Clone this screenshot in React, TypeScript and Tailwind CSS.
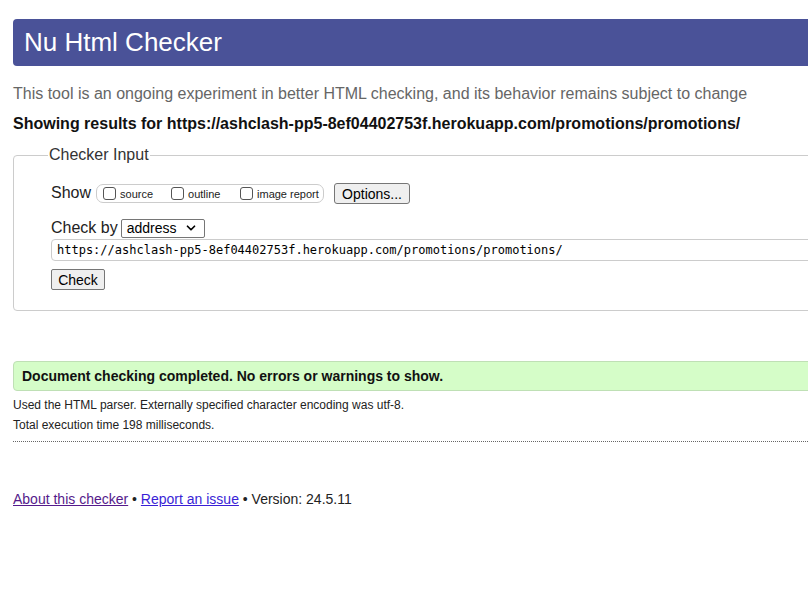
import { ChevronDown } from 'lucide-react';

const url = 'https://ashclash-pp5-8ef04402753f.herokuapp.com/promotions/promotions/';

const checks = [
  { label: 'source', w: 'w-[68px]' },
  { label: 'outline', w: 'w-[69px]' },
  { label: 'image report', w: 'w-auto' },
];

export default function App() {
  return (
    <div className="h-[607px] w-[808px] overflow-hidden bg-white font-['Liberation_Sans',Arial,sans-serif] text-[#222]">
      <div className="w-[1000px] pl-[13px] pt-[19px]">
        <header className="flex h-[47px] items-center rounded-[4px] bg-[#4a5298] pl-[11px] text-[26px] text-white">
          Nu Html Checker
        </header>

        <p className="mt-[18px] text-[16px] leading-[20px] text-[#666]">
          This tool is an ongoing experiment in better HTML checking, and its behavior remains subject to change
        </p>
        <p className="mt-[10px] text-[16px] font-bold leading-[20px] text-[#111]">
          Showing results for {url}
        </p>

        <fieldset className="mt-[11px] h-[166px] rounded-[4px] border border-[#ccc] pl-[37px]">
          <legend className="-ml-[3px] px-[1px] text-[16px] leading-[20px] text-[#333]">Checker Input</legend>

          <div className="mt-[17px] flex h-[22px] items-center">
            <span className="text-[16px] text-[#222]">Show</span>
            <div className="ml-[5px] flex h-[19px] w-[228px] items-center rounded-[7px] border border-[#ccc] pl-[6px] text-[11px]">
              {checks.map((c) => (
                <label key={c.label} className={`flex items-center ${c.w}`}>
                  <span className="h-[13px] w-[13px] rounded-[3px] border border-[#555] bg-white" />
                  <span className="ml-[4px] pt-[2px]">{c.label}</span>
                </label>
              ))}
            </div>
            <button className="ml-[10px] h-[21px] w-[76px] rounded-[3px] border border-[#767676] bg-[#efefef] text-[14px] text-black">
              Options...
            </button>
          </div>

          <div className="mt-[14px] flex h-[20px] items-center">
            <span className="text-[16px] text-[#222]">Check by</span>
            <div className="ml-[3px] flex h-[19px] w-[84px] items-center justify-between rounded-[2px] border border-[#767676] pl-[5px] pr-[6px] text-[14px] text-black">
              address
              <ChevronDown className="h-[14px] w-[14px]" strokeWidth={3} />
            </div>
          </div>

          <div className="mt-[1px] flex h-[22px] items-center rounded-l-[4px] border border-[#ccc] pl-[5px] font-['DejaVu_Sans_Mono',monospace] text-[12px] text-black">
            {url}
          </div>

          <button className="mt-[8px] h-[21px] w-[54px] rounded-[2px] border border-[#767676] bg-[#efefef] text-[14px] text-black">
            Check
          </button>
        </fieldset>

        <div className="mt-[50px] flex h-[30px] items-center rounded-l-[4px] border border-[#bfe0b5] bg-[#d5fdc8] pl-[8px] text-[14px] font-bold text-[#111]">
          Document checking completed. No errors or warnings to show.
        </div>
        <p className="mt-[6px] text-[12px] leading-[16px] text-[#222]">
          Used the HTML parser. Externally specified character encoding was utf-8.
        </p>
        <p className="mt-[4px] text-[12px] leading-[16px] text-[#222]">Total execution time 198 milliseconds.</p>
        <div className="mt-[8px] border-t border-dotted border-[#666]" />

        <p className="mt-[48px] text-[14px] leading-[18px] text-[#222]">
          <a className="text-[#551a8b] underline">About this checker</a> •{' '}
          <a className="text-[#3a1fd6] underline">Report an issue</a> • Version: 24.5.11
        </p>
      </div>
    </div>
  );
}
